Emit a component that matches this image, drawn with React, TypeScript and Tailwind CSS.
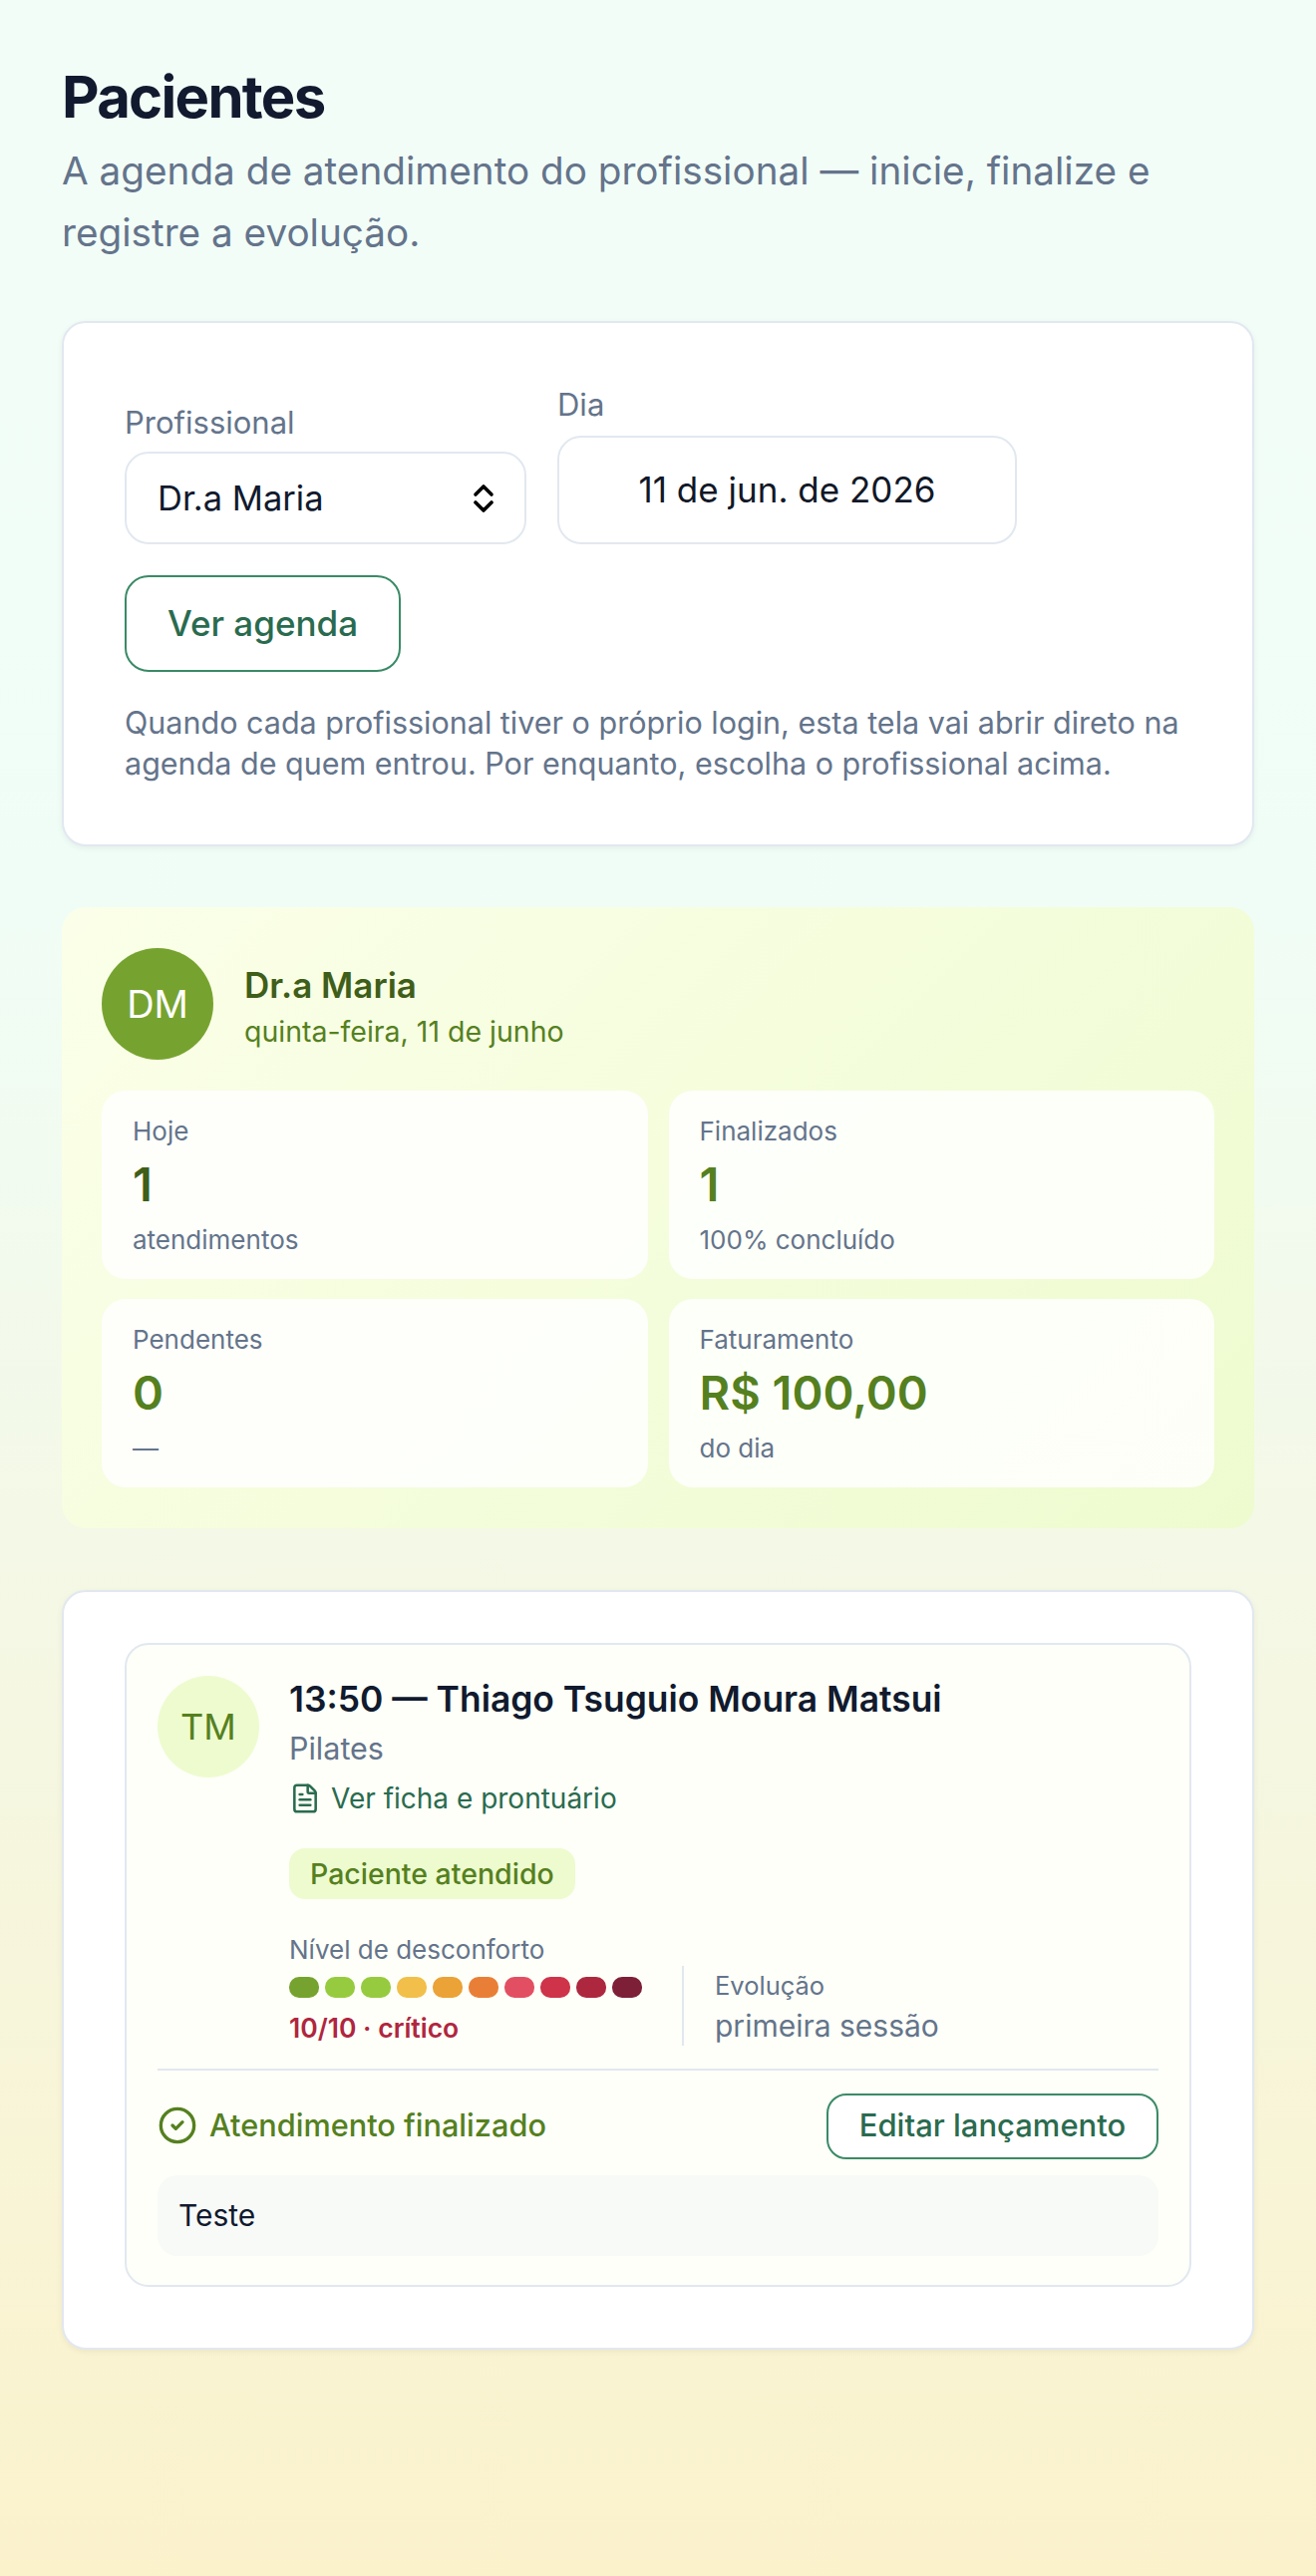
import { CircleCheck, FileText } from "lucide-react";

const levels = [
  "bg-[#76a32f]",
  "bg-[#97cb3f]",
  "bg-[#97cb3f]",
  "bg-[#f2bf4a]",
  "bg-[#eba236]",
  "bg-[#e97f36]",
  "bg-[#e34f62]",
  "bg-[#cf3349]",
  "bg-[#ad283f]",
  "bg-[#7e1f38]",
];

function Stat({ label, value, note, strong }: { label: string; value: string; note: string; strong?: boolean }) {
  return (
    <div className="h-[189px] rounded-[24px] bg-white/85 px-[31px] pt-[23px]">
      <div className="text-[26px] leading-[36px] text-[#64748b]">{label}</div>
      <div className={`mt-[5px] text-[47px] leading-[60px] font-semibold ${strong ? "text-[#3f5e1a]" : "text-[#55801f]"}`}>
        {value}
      </div>
      <div className="mt-[6px] text-[26px] leading-[40px] text-[#64748b]">{note}</div>
    </div>
  );
}

export default function App() {
  return (
    <div className="min-h-[2584px] w-[1320px] bg-[linear-gradient(180deg,#f3fdf8_0%,#f0fdf6_35%,#f4f8e6_60%,#fbf2cc_100%)] px-[62px] pt-[62px] font-[Inter,sans-serif] text-[#111827]">
      {/* Encabezado */}
      <h1 className="text-[58px] leading-[70px] font-bold tracking-[-1.7px] text-[#111a2e]">Pacientes</h1>
      <p className="mt-[8px] text-[38.7px] leading-[62px] text-[#64748b]">
        A agenda de atendimento do profissional — inicie, finalize e registre a evolução.
      </p>

      {/* Selector de profissional */}
      <section className="mt-[58px] h-[527px] rounded-[24px] border-2 border-[#e2e8f0] bg-white px-[61px] pt-[62px] shadow-[0_2px_6px_rgba(15,23,42,0.06)]">
        <div className="flex items-end gap-[31px]">
          <div>
            <div className="mb-[9px] text-[31px] leading-[40px] text-[#64748b]">Profissional</div>
            <div className="flex h-[93px] w-[403px] items-center justify-between rounded-[24px] border-2 border-[#e2e8f0] pr-[30px] pl-[31px] text-[34.5px] text-[#111a2e]">
              Dr.a Maria
              <svg width="22" height="30" viewBox="0 0 22 30" fill="none" stroke="#000" strokeWidth="3.6" strokeLinecap="round" strokeLinejoin="round">
                <path d="M3 11 11 3l8 8" />
                <path d="M3 19l8 8 8-8" />
              </svg>
            </div>
          </div>
          <div>
            <div className="mb-[11px] text-[31px] leading-[40px] text-[#64748b]">Dia</div>
            <div className="flex h-[109px] w-[461px] items-center justify-center rounded-[24px] border-2 border-[#e2e8f0] text-[35px] text-[#111827]">
              11 de jun. de 2026
            </div>
          </div>
        </div>
        <button className="mt-[31px] h-[97px] w-[277px] rounded-[24px] border-2 border-[#3a8a66] text-[35px] font-medium text-[#2a6b4f]">
          Ver agenda
        </button>
        <p className="mt-[30px] text-[30.5px] leading-[41px] text-[#64748b]">
          Quando cada profissional tiver o próprio login, esta tela vai abrir direto na agenda de quem entrou. Por enquanto, escolha o profissional acima.
        </p>
      </section>

      {/* Resumo do dia */}
      <section className="mt-[61px] h-[623px] rounded-[24px] bg-[linear-gradient(135deg,#fbffe9_0%,#eefbcf_100%)] px-[40px] pt-[41px]">
        <div className="flex items-center gap-[31px]">
          <div className="flex h-[112px] w-[112px] items-center justify-center rounded-full bg-[#76a32f] text-[38px] text-white">DM</div>
          <div className="pt-[5px]">
            <div className="text-[35px] leading-[46px] font-semibold text-[#3f5e1a]">Dr.a Maria</div>
            <div className="mt-[4px] text-[28.5px] leading-[40px] text-[#55801f]">quinta-feira, 11 de junho</div>
          </div>
        </div>
        <div className="mt-[31px] grid grid-cols-2 gap-x-[21px] gap-y-[20px]">
          <Stat label="Hoje" value="1" note="atendimentos" strong />
          <Stat label="Finalizados" value="1" note="100% concluído" />
          <Stat label="Pendentes" value="0" note="—" />
          <Stat label="Faturamento" value="R$ 100,00" note="do dia" />
        </div>
      </section>

      {/* Lista de atendimentos */}
      <section className="mt-[62px] h-[762px] rounded-[24px] border-2 border-[#e2e8f0] bg-white px-[61px] pt-[51px] shadow-[0_2px_6px_rgba(15,23,42,0.06)]">
        <article className="h-[646px] rounded-[24px] border-2 border-[#e2e8f0] bg-[#fdfff8] px-[31px] pt-[31px]">
          <div className="flex gap-[30px]">
            <div className="flex h-[102px] w-[102px] shrink-0 items-center justify-center rounded-full bg-[#eefbcf] text-[36px] text-[#55801f]">TM</div>
            <div>
              <div className="text-[35.4px] leading-[48px] font-semibold text-[#111a2e]">13:50 — Thiago Tsuguio Moura Matsui</div>
              <div className="mt-[3px] text-[30.5px] leading-[44px] text-[#64748b]">Pilates</div>
              <div className="mt-[8px] flex items-center gap-[10px] text-[28px] leading-[40px] text-[#2a6b4f]">
                <FileText className="h-[32px] w-[32px]" strokeWidth={1.9} />
                Ver ficha e prontuário
              </div>
              <div className="mt-[30px] inline-block h-[51px] rounded-[16px] bg-[#eefbcf] px-[21px] text-[28.5px] leading-[51px] font-medium text-[#55801f]">
                Paciente atendido
              </div>
              <div className="mt-[33px] flex items-end">
                <div className="w-[394px]">
                  <div className="text-[26px] leading-[36px] text-[#64748b]">Nível de desconforto</div>
                  <div className="mt-[9px] flex gap-[6px]">
                    {levels.map((c, i) => (
                      <span key={i} className={`h-[21px] w-[30px] rounded-[10px] ${c}`} />
                    ))}
                  </div>
                  <div className="mt-[12px] text-[26.5px] leading-[36px] font-semibold text-[#b0263f]">10/10 · crítico</div>
                </div>
                <div className="flex h-[80px] flex-col justify-end border-l-2 border-[#e2e8f0] pl-[31px]">
                  <div className="text-[25.5px] leading-[36px] text-[#64748b]">Evolução</div>
                  <div className="mt-[2px] text-[30px] leading-[40px] text-[#64748b]">primeira sessão</div>
                </div>
              </div>
            </div>
          </div>
          <div className="mt-[23px] flex h-[91px] items-center justify-between border-t-2 border-[#e2e8f0] pt-[22px]">
            <div className="flex items-center gap-[12px] text-[30.7px] font-medium text-[#55801f]">
              <CircleCheck className="h-[40px] w-[40px]" strokeWidth={2} />
              Atendimento finalizado
            </div>
            <button className="h-[66px] w-[333px] rounded-[20px] border-2 border-[#3a8a66] bg-white text-[31px] font-medium text-[#2a6b4f]">
              Editar lançamento
            </button>
          </div>
          <div className="mt-[16px] h-[81px] rounded-[20px] bg-[#f8faf8] px-[21px] text-[30px] leading-[81px] text-[#111a2e]">Teste</div>
        </article>
      </section>
    </div>
  );
}
